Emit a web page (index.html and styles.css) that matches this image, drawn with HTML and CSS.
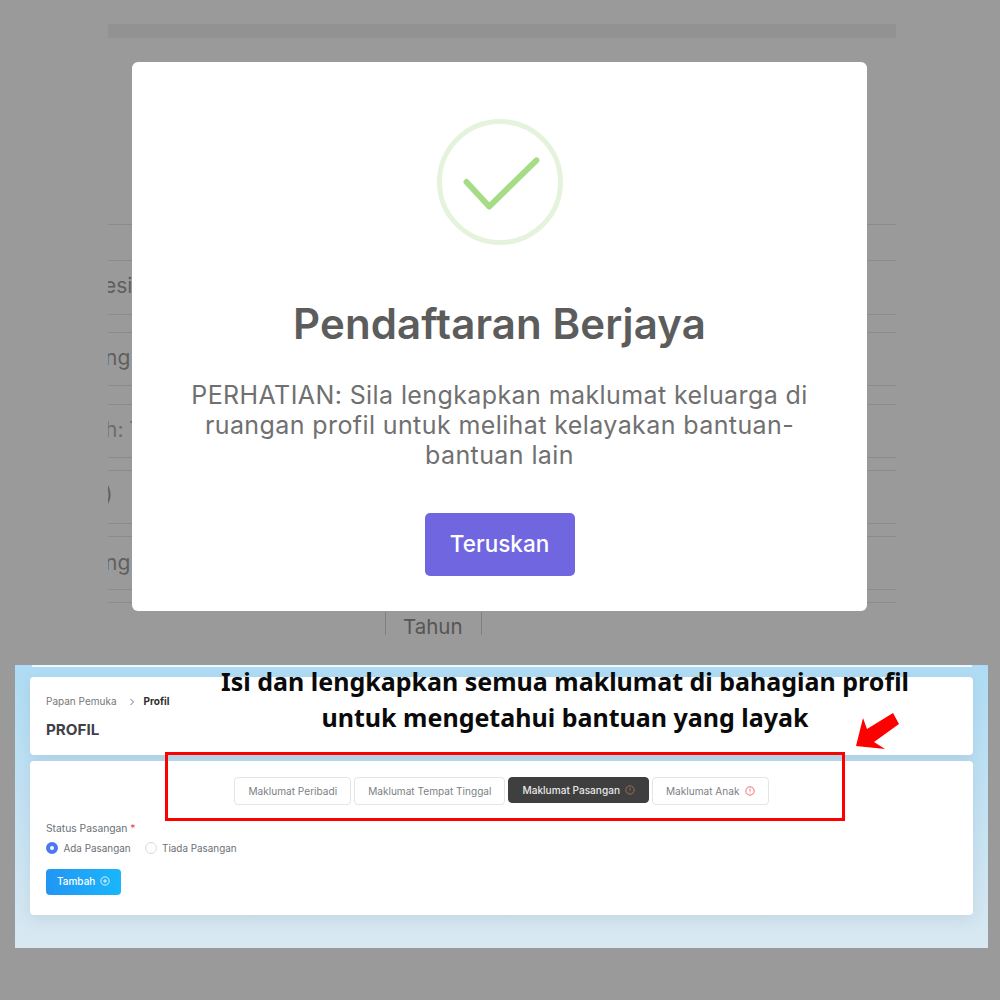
FILE: index.html
```html
<!DOCTYPE html>
<html lang="ms">
<head>
<meta charset="utf-8">
<title>Pendaftaran Berjaya</title>
<link rel="stylesheet" href="styles.css">
</head>
<body>
<section class="backdrop">
  <div class="page-behind">
    <div class="bar"></div>
    <div class="row r1"></div>
    <div class="row r2"><span class="cut c1">esic</span></div>
    <div class="row r3"></div>
    <div class="row r4"><span class="cut c2">ng</span></div>
    <div class="row r3 wide"></div>
    <div class="row r4"><span class="cut c3">h: T</span></div>
    <div class="row r5"></div>
    <div class="row r6"><span class="cut c4">)</span></div>
    <div class="row r5"></div>
    <div class="row r7"><span class="cut c5">ng</span></div>
    <div class="row r5"></div>
    <div class="row last"></div>
    <div class="year">Tahun</div>
  </div>
  <div class="modal">
    <svg class="success" viewBox="0 0 130 130" aria-hidden="true">
      <circle cx="65" cy="65" r="61.5" class="ring"/>
      <path d="M31 65 L54 90 L102 43" class="tick"/>
    </svg>
    <h1 class="modal-title">Pendaftaran Berjaya</h1>
    <p class="modal-text">PERHATIAN: Sila lengkapkan maklumat keluarga di ruangan profil untuk melihat kelayakan bantuan-bantuan lain</p>
    <button class="confirm">Teruskan</button>
  </div>
</section>

<section class="shot">
  <div class="topline"></div>
  <div class="card head-card">
    <nav class="crumbs"><span>Papan Pemuka</span>
      <svg class="chev" viewBox="0 0 8 8" aria-hidden="true"><path d="M2.5 1 L5.5 4 L2.5 7"/></svg>
      <b>Profil</b></nav>
    <h2 class="page-title">PROFIL</h2>
  </div>
  <div class="card form-card">
    <div class="tabs">
      <button class="tab">Maklumat Peribadi</button>
      <button class="tab">Maklumat Tempat Tinggal</button>
      <button class="tab active">Maklumat Pasangan
        <svg class="alert dim" viewBox="0 0 12 12" aria-hidden="true"><circle cx="6" cy="6" r="5"/><path d="M6 3.2 V6.6 M6 8.2 V8.8"/></svg>
      </button>
      <button class="tab">Maklumat Anak
        <svg class="alert" viewBox="0 0 12 12" aria-hidden="true"><circle cx="6" cy="6" r="5"/><path d="M6 3.2 V6.6 M6 8.2 V8.8"/></svg>
      </button>
    </div>
    <div class="field-label">Status Pasangan <span class="req">*</span></div>
    <div class="radios">
      <span class="radio"><i class="dot on"></i>Ada Pasangan</span>
      <span class="radio"><i class="dot"></i>Tiada Pasangan</span>
    </div>
    <button class="add">Tambah
      <svg class="plus" viewBox="0 0 12 12" aria-hidden="true"><circle cx="6" cy="6" r="5"/><path d="M6 3.6 V8.4 M3.6 6 H8.4"/></svg>
    </button>
  </div>
  <p class="callout">Isi dan lengkapkan semua maklumat di bahagian profil<br>untuk mengetahui bantuan yang layak</p>
  <div class="red-frame"></div>
  <svg class="arrow" viewBox="0 0 46 38" aria-hidden="true"><polygon points="0,34 7,6 11,17 37,1 43,12 18,30 29,37"/></svg>
</section>
</body>
</html>
```

FILE: styles.css
```css
* { box-sizing: border-box; }
html, body { margin: 0; padding: 0; }
body {
  width: 1000px;
  height: 1000px;
  overflow: hidden;
  background: #9a9a9a;
  font-family: Inter, "Noto Sans", sans-serif;
}
.backdrop { position: relative; height: 665px; }
.page-behind { padding: 24px 104px 0 108px; }
.bar { height: 14px; background: #929293; margin-bottom: 186px; }
.row { border-top: 1px solid #8b8b8b; overflow: hidden; position: relative; color: #5f5f5f; font-size: 21px; line-height: 26px; }
.r1 { height: 36px; }
.r2 { height: 54px; padding-top: 12px; }
.r3 { height: 18px; }
.r3.wide { height: 19px; }
.r4 { height: 53px; padding-top: 12px; }
.r5 { height: 13px; }
.r6 { height: 53px; padding-top: 10px; }
.r7 { height: 53px; padding-top: 13px; }
.last { height: 10px; }
.cut { display: block; }
.c1 { margin-left: -4px; }
.c2, .c4, .c5 { margin-left: -3px; }
.c3 { margin-left: -3px; color: #6c6c6c; }
.year {
  margin-left: 277px;
  width: 97px;
  height: 23px;
  padding-left: 17px;
  border: solid #7f7f7f;
  border-width: 0 1px;
  color: #565656;
  font-size: 20.5px;
  line-height: 30px;
}
.modal {
  position: absolute;
  left: 132px;
  top: 62px;
  width: 735px;
  height: 549px;
  background: #fff;
  border-radius: 6px;
  display: flex;
  flex-direction: column;
  align-items: center;
  padding-top: 56px;
}
.success { width: 128px; height: 128px; display: block; }
.ring { fill: none; stroke: #e5f3dc; stroke-width: 5; }
.tick { fill: none; stroke: #a5dc86; stroke-width: 6; stroke-linecap: round; stroke-linejoin: round; }
.modal-title {
  margin: 51px 0 0;
  color: #5c5c5c;
  font-size: 42px;
  line-height: 54px;
  font-weight: 600;
  letter-spacing: .1px;
}
.modal-text {
  margin: 29px 0 0;
  width: 640px;
  text-align: center;
  color: #707070;
  font-size: 25px;
  line-height: 30px;
  letter-spacing: .4px;
}
.confirm {
  margin-top: 43px;
  width: 150px;
  height: 63px;
  padding: 0 0 2px;
  border: 0;
  border-radius: 5px;
  background: #7066e0;
  color: #fff;
  font: 500 22.5px Inter, sans-serif;
}
.shot {
  position: relative;
  width: 973px;
  height: 283px;
  margin-left: 15px;
  padding: 0 15px;
  background: linear-gradient(#aedcf4, #d9e8f1);
  color: #6b6f75;
}
.topline { height: 1.5px; margin: 0 1px 10.5px 2px; background: #eef7fc; }
.card { background: #fff; border-radius: 4px; box-shadow: 0 4px 14px rgba(90, 120, 140, .14); }
.head-card { height: 78px; padding: 17px 16px 0; margin-bottom: 6px; }
.crumbs { display: flex; align-items: center; font-size: 10px; line-height: 14px; color: #777; }
.crumbs b { color: #2e2e2e; font-weight: 700; }
.chev { width: 8px; height: 8px; margin: 1px 8px 0 11px; fill: none; stroke: #666; stroke-width: .9; }
.page-title { margin: 12px 0 0; font-size: 15.2px; line-height: 20px; font-weight: 700; color: #3f4148; }
.form-card { height: 154px; padding: 16px 16px 0; }
.tabs { display: flex; justify-content: center; gap: 3px; margin: 0 0 16px; align-items: flex-start; }
.tab {
  display: flex;
  align-items: center;
  gap: 5px;
  height: 28px;
  padding: 0 13px;
  background: #fff;
  border: 1px solid #e4e5e8;
  border-radius: 4px;
  color: #7d7f85;
  font: 10.1px Inter, sans-serif;
  white-space: nowrap;
}
.tab.active { height: 26px; background: #3f3f3f; border-color: #3f3f3f; color: #e8e8e8; font-weight: 500; }
.alert { width: 10px; height: 10px; fill: none; stroke: #f0605f; stroke-width: 1.1; }
.alert.dim { stroke: #a5705f; }
.field-label { font-size: 10.3px; line-height: 14px; }
.req { color: #f04e5e; }
.radios { display: flex; gap: 14px; margin-top: 6px; font-size: 9.9px; line-height: 14px; }
.radio { display: flex; align-items: center; gap: 5.5px; }
.dot { width: 12px; height: 12px; border-radius: 50%; border: 1px solid #d9dadd; background: #fff; }
.dot.on { border: 4px solid #4f78ef; }
.add {
  display: flex;
  align-items: center;
  gap: 5px;
  width: 75px;
  height: 26px;
  margin: 14px 0 0;
  padding: 0 0 2px 11px;
  border: 0;
  border-radius: 4px;
  background: linear-gradient(90deg, #2196f3, #1ab6fc);
  color: #fff;
  font: 500 10px Inter, sans-serif;
}
.plus { width: 10px; height: 10px; fill: none; stroke: #fff; stroke-width: 1; }
.callout {
  position: absolute;
  left: 200px;
  top: -2px;
  width: 700px;
  margin: 0;
  text-align: center;
  color: #0a0a0a;
  font: 700 25px/36px "Noto Sans", sans-serif;
}
.red-frame {
  position: absolute;
  left: 150px;
  top: 87px;
  width: 680px;
  height: 69px;
  border: 3px solid #f00;
}
.arrow { position: absolute; left: 841px; top: 47px; width: 46px; height: 38px; fill: #f00; }
```
